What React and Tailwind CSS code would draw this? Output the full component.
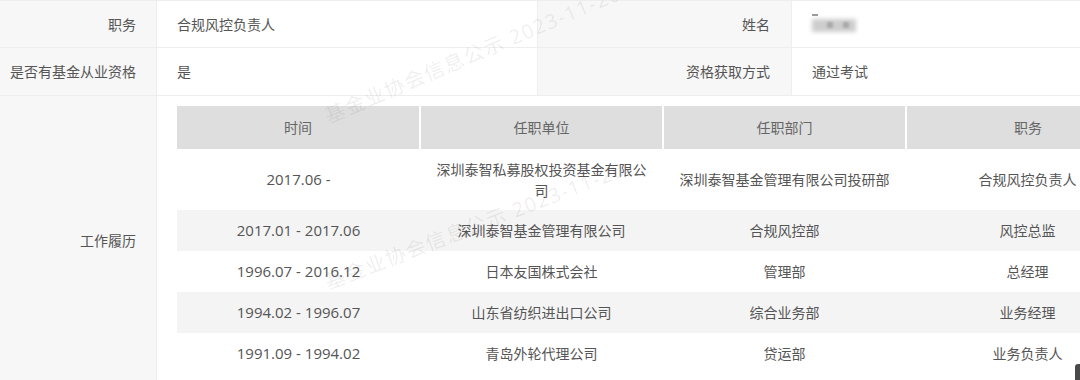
import React from 'react';

const rows = [
  { time: '2017.06 -', unit: '深圳泰智私募股权投资基金有限公司', dept: '深圳泰智基金管理有限公司投研部', title: '合规风控负责人', tall: true },
  { time: '2017.01 - 2017.06', unit: '深圳泰智基金管理有限公司', dept: '合规风控部', title: '风控总监' },
  { time: '1996.07 - 2016.12', unit: '日本友国株式会社', dept: '管理部', title: '总经理' },
  { time: '1994.02 - 1996.07', unit: '山东省纺织进出口公司', dept: '综合业务部', title: '业务经理' },
  { time: '1991.09 - 1994.02', unit: '青岛外轮代理公司', dept: '贷运部', title: '业务负责人' },
];

const WATERMARK = '基金业协会信息公示 2023-11-20';

function Watermark({ className }) {
  return (
    <div
      className={`pointer-events-none absolute origin-left whitespace-nowrap text-[20px] tracking-[1.5px] text-[rgba(0,0,0,0.08)] ${className}`}
    >
      {WATERMARK}
    </div>
  );
}

export default function App() {
  return (
    <div className="relative h-[380px] w-[1080px] overflow-hidden bg-white font-['Open_Sans','Noto_Sans_CJK_SC',sans-serif] text-[14px] text-[#555]">
      {/* 基本信息 */}
      <div className="flex h-[48px] border-t border-b border-[#eee]">
        <div className="flex w-[157px] shrink-0 items-center justify-end border-r border-[#eee] bg-[#f7f7f7] pr-[20px]">职务</div>
        <div className="flex w-[380px] shrink-0 items-center pl-[20px]">合规风控负责人</div>
        <div className="flex w-[255px] shrink-0 items-center justify-end border-l border-r border-[#eee] bg-[#f7f7f7] pr-[21px]">姓名</div>
        <div className="flex flex-1 items-center pl-[20px]">
          {/* 姓名已打码 */}
          <div className="relative h-[22px] w-[44px]">
            <span className="absolute left-0 top-[1px] h-[2px] w-[6px] bg-[#999] blur-[0.5px]" />
            <span className="absolute left-0 top-[6px] h-[13px] w-[44px] bg-[#cdcdcd] blur-[2px]" />
            <span className="absolute left-[15px] top-[9px] h-[6px] w-[6px] bg-[#aaa] blur-[1px]" />
            <span className="absolute left-[31px] top-[9px] h-[6px] w-[6px] bg-[#aaa] blur-[1px]" />
          </div>
        </div>
      </div>
      <div className="flex h-[48px] border-b border-[#eee]">
        <div className="flex w-[157px] shrink-0 items-center justify-end border-r border-[#eee] bg-[#f7f7f7] pr-[20px]">是否有基金从业资格</div>
        <div className="flex w-[380px] shrink-0 items-center pl-[20px]">是</div>
        <div className="flex w-[255px] shrink-0 items-center justify-end border-l border-r border-[#eee] bg-[#f7f7f7] pr-[21px]">资格获取方式</div>
        <div className="flex flex-1 items-center pl-[20px]">通过考试</div>
      </div>

      {/* 工作履历 */}
      <div className="flex">
        <div className="flex w-[157px] shrink-0 items-center justify-end border-r border-[#eee] bg-[#f7f7f7] pr-[20px]">工作履历</div>
        <div className="py-[10px] pl-[20px]">
          <table className="w-[972px] table-fixed border-collapse">
            <thead>
              <tr className="h-[43px] bg-[#dedede] text-[#666]">
                <th className="font-normal">时间</th>
                <th className="border-l-2 border-white font-normal">任职单位</th>
                <th className="border-l-2 border-white font-normal">任职部门</th>
                <th className="border-l-2 border-white font-normal">职务</th>
              </tr>
            </thead>
            <tbody>
              {rows.map((r, i) => (
                <tr key={i} className={`${r.tall ? 'h-[61px]' : 'h-[41px]'} ${i % 2 === 1 ? 'bg-[#f4f4f4]' : 'bg-white'}`}>
                  <td className="px-[14px] text-center text-[15px] leading-[21px]">{r.time}</td>
                  <td className="px-[14px] text-center leading-[21px]">{r.unit}</td>
                  <td className="px-[14px] text-center leading-[21px]">{r.dept}</td>
                  <td className="px-[14px] text-center leading-[21px]">{r.title}</td>
                </tr>
              ))}
            </tbody>
          </table>
        </div>
      </div>

      <Watermark className="left-[326px] top-[102px] -rotate-[23deg]" />
      <Watermark className="left-[326px] top-[268px] -rotate-[21deg]" />

      {/* 右下角浮动按钮 */}
      <div className="absolute bottom-0 left-[1075px] h-[16px] w-[20px] rounded-tl-[3px] bg-[#4a4a4a]" />
    </div>
  );
}
